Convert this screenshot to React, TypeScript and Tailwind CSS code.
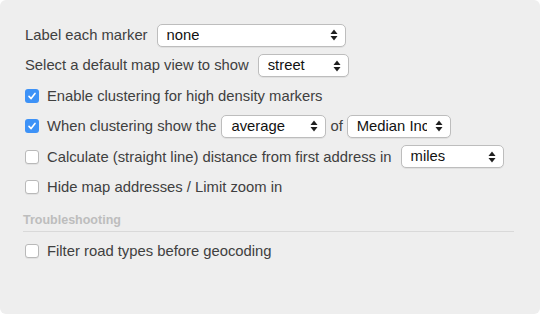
import React from "react";

const font = { fontFamily: '"Liberation Sans", Arial, sans-serif' };

function Arrows() {
  return (
    <svg width="8" height="12" viewBox="0 0 8 12" className="shrink-0">
      <path d="M4 0.5 L7.5 5 L0.5 5 Z" fill="#1f1f1f" />
      <path d="M4 11.5 L7.5 7 L0.5 7 Z" fill="#1f1f1f" />
    </svg>
  );
}

function Select({
  value,
  width,
  textWidth,
}: {
  value: string;
  width: string;
  textWidth?: string;
}) {
  return (
    <div
      className={`flex h-[23px] items-center justify-between rounded-[5px] border border-[#bdbdbd] bg-white pl-[9px] pr-[7px] shadow-[0_1px_0_rgba(0,0,0,0.06)] ${width}`}
    >
      <span
        className={`overflow-hidden whitespace-nowrap text-[14.8px] leading-none text-[#111] ${textWidth ?? ""}`}
      >
        {value}
      </span>
      <Arrows />
    </div>
  );
}

function Checkbox({ checked }: { checked?: boolean }) {
  if (checked) {
    return (
      <div className="flex h-[14px] w-[14px] shrink-0 items-center justify-center rounded-[3px] bg-[#3d92f7]">
        <svg width="10" height="10" viewBox="0 0 10 10">
          <path
            d="M2 5.4 L4.1 7.6 L8 2.4"
            fill="none"
            stroke="white"
            strokeWidth="1.6"
            strokeLinecap="round"
            strokeLinejoin="round"
          />
        </svg>
      </div>
    );
  }
  return (
    <div className="h-[14px] w-[14px] shrink-0 rounded-[3px] border border-[#b9b9b9] bg-white shadow-[0_1px_0_rgba(0,0,0,0.05)]" />
  );
}

function Row({ children }: { children: React.ReactNode }) {
  return <div className="flex h-[30.4px] items-center">{children}</div>;
}

export default function App() {
  return (
    <div className="h-[314px] w-[540px] bg-white" style={font}>
      <div className="h-full w-full rounded-[6px] bg-[#eeeeee] pl-[25px] pr-[26px] pt-[20px] text-[14.8px] text-[#404040]">
        <Row>
          <span>Label each marker</span>
          <div className="ml-[9px]">
            <Select value="none" width="w-[189px]" />
          </div>
        </Row>
        <Row>
          <span>Select a default map view to show</span>
          <div className="ml-[9px]">
            <Select value="street" width="w-[91px]" />
          </div>
        </Row>
        <Row>
          <Checkbox checked />
          <span className="ml-[8px]">Enable clustering for high density markers</span>
        </Row>
        <Row>
          <Checkbox checked />
          <span className="ml-[8px]">When clustering show the</span>
          <div className="ml-[5px]">
            <Select value="average" width="w-[105px]" />
          </div>
          <span className="mx-[4px]">of</span>
          <Select value="Median Income" width="w-[104px]" textWidth="w-[70px]" />
        </Row>
        <Row>
          <Checkbox />
          <span className="ml-[8px]">Calculate (straight line) distance from first address in</span>
          <div className="ml-[9px]">
            <Select value="miles" width="w-[103px]" />
          </div>
        </Row>
        <Row>
          <Checkbox />
          <span className="ml-[8px]">Hide map addresses / Limit zoom in</span>
        </Row>
        <div className="-ml-[2px] mt-[9px] border-b border-[#d9d9d9] pb-[1px] text-[12.5px] font-bold text-[#bdbdbd]">
          Troubleshooting
        </div>
        <div className="mt-[4px]">
          <Row>
            <Checkbox />
            <span className="ml-[8px]">Filter road types before geocoding</span>
          </Row>
        </div>
      </div>
    </div>
  );
}
